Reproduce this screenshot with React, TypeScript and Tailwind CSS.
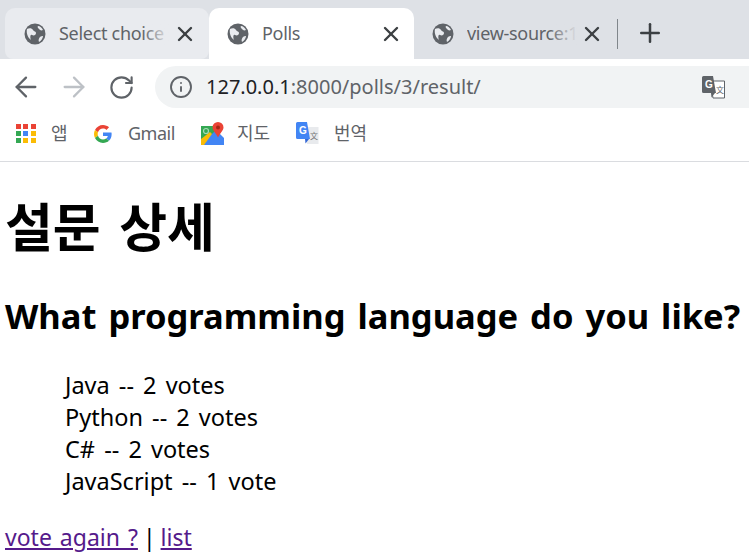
import { ArrowLeft, ArrowRight, Info, Plus, RotateCw, X } from 'lucide-react';

const font = "font-['Noto_Sans','Noto_Sans_CJK_KR',sans-serif]";

function Globe() {
  return (
    <svg width="22" height="22" viewBox="0 0 22 22" className="shrink-0">
      <circle cx="11" cy="11" r="10.5" fill="#5f6368" />
      <path d="M3 6c2-1 5-1 6 1s3 1 3 3-2 3-4 2-2 3-1 5C4 15 2 10 3 6z" fill="#e9ebef" />
      <path d="M14 3c2 0 4 2 5 4-2 1-3 0-4-1s-2-2-1-3zM19 13c0 2-2 5-4 6-1-2 0-4 1-5s2-1 3-1z" fill="#e9ebef" />
    </svg>
  );
}

function Tab({ title, active, first }: { title: string; active?: boolean; first?: boolean }) {
  return (
    <div
      className={`flex items-center h-[51px] shrink-0 rounded-t-[10px] ${first ? 'w-[204px] pl-[19px] pr-[12px] bg-[#e9ebef] rounded-b-[8px]' : active ? 'w-[205px] pl-[18px] pr-[11px] bg-white' : 'w-[197px] pl-[18px] pr-[7px]'}`}
    >
      <Globe />
      <div className="relative ml-[13px] flex-1 overflow-hidden whitespace-nowrap text-[18px] tracking-[-0.3px] text-[#5f6368]">
        {title}
        {first && <div className="absolute right-0 top-0 bottom-0 w-[28px] bg-gradient-to-r from-transparent to-[#e9ebef]" />}
        {!first && !active && <div className="absolute right-0 top-0 bottom-0 w-[28px] bg-gradient-to-r from-transparent to-[#dee1e6]" />}
      </div>
      <X size={24} strokeWidth={2.4} className="ml-[3px] shrink-0 text-[#3c4043]" />
    </div>
  );
}

function AppsIcon() {
  const colors = ['#ea4335', '#ea4335', '#ea4335', '#34a853', '#4285f4', '#fbbc05', '#34a853', '#fbbc05', '#fbbc05'];
  return (
    <div className="grid grid-cols-3 gap-[2px] w-[20px]">
      {colors.map((c, i) => (
        <div key={i} className="w-[5px] h-[5px]" style={{ background: c }} />
      ))}
    </div>
  );
}

function GoogleIcon() {
  return (
    <svg width="18" height="18" viewBox="0 0 48 48">
      <path fill="#ea4335" d="M24 9.5c3.5 0 6.700 1.200 9.200 3.600l6.900-6.900C35.900 2.400 30.500 0 24 0 14.600 0 6.500 5.400 2.600 13.200l8 6.200C12.500 13.700 17.800 9.500 24 9.500z" />
      <path fill="#4285f4" d="M47 24.500c0-1.600-.1-3.100-.4-4.500H24v9h12.900c-.6 3-2.200 5.500-4.700 7.200l7.700 6C44.400 38.100 47 31.900 47 24.500z" />
      <path fill="#fbbc05" d="M10.600 28.600c-.5-1.400-.8-3-.8-4.600s.3-3.200.8-4.600l-8-6.200C.9 16.500 0 20.100 0 24s.9 7.500 2.600 10.800l8-6.200z" />
      <path fill="#34a853" d="M24 48c6.500 0 11.900-2.100 15.900-5.800l-7.700-6c-2.200 1.400-4.900 2.300-8.200 2.300-6.200 0-11.500-4.200-13.400-9.900l-8 6.200C6.500 42.600 14.600 48 24 48z" />
    </svg>
  );
}

function MapsIcon() {
  return (
    <svg width="23" height="23" viewBox="0 0 23 23">
      <path d="M0 4h15v19H0z" fill="#34a853" />
      <path d="M0 23L15 8l8 8v7z" fill="#4285f4" />
      <path d="M0 17L9 10l2 2-8 11H0z" fill="#fbbc05" />
      <circle cx="5" cy="9" r="2.500" fill="none" stroke="#a8dab5" strokeWidth="1.200" />
      <path d="M17 0a5.500 5.500 0 0 1 5.500 5.500c0 3-3.500 5.500-5.500 10-2-4.500-5.500-7-5.500-10A5.500 5.500 0 0 1 17 0z" fill="#ea4335" />
      <circle cx="17" cy="5.500" r="2" fill="#a52714" />
    </svg>
  );
}

function TranslateIcon({ mono }: { mono?: boolean }) {
  const back = mono ? '#ffffff' : '#e8eaed';
  const front = mono ? '#5f6368' : '#4285f4';
  return (
    <svg width="23" height="23" viewBox="0 0 23 23">
      <path d="M8 5h14.500v17H11z" fill={back} stroke={mono ? '#5f6368' : 'none'} strokeWidth="1" />
      <path d="M1.500 0H11l3 17H1.500A1.500 1.500 0 0 1 0 15.500v-14A1.500 1.500 0 0 1 1.500 0z" fill={front} />
      <path d="M9 17l4 0-3.500 4.500z" fill={mono ? '#5f6368' : '#3367d6'} />
      <text x="3" y="12" fontSize="10" fontWeight="700" fill="#ffffff" fontFamily="'Liberation Sans', sans-serif">G</text>
      <text x="14" y="17" fontSize="8" fill={mono ? '#5f6368' : '#757575'} fontFamily="'Noto Sans CJK SC', sans-serif">文</text>
    </svg>
  );
}

function Bookmark({ icon, label, gap, width }: { icon: React.ReactNode; label: string; gap: string; width: string }) {
  return (
    <div className={`flex items-center shrink-0 ${width}`}>
      {icon}
      <span className={`${gap} text-[18px] text-[#5f6368] whitespace-nowrap`}>{label}</span>
    </div>
  );
}

export default function App() {
  return (
    <div className={`${font} w-[749px] h-[554px] overflow-hidden bg-white text-black`}>
      {/* tab strip */}
      <div className="flex items-start h-[59px] pt-2 pl-[5px] bg-[#dee1e6]">
        <Tab title="Select choice" first />
        <Tab title="Polls" active />
        <Tab title="view-source:1" />
        <div className="ml-[6px] mt-[11px] w-px h-[30px] bg-[#80868b]" />
        <Plus size={30} strokeWidth={2} className="ml-[17px] mt-[10px] text-[#3c4043]" />
      </div>

      {/* address bar */}
      <div className="flex items-center h-[54px] pt-[2px] bg-white">
        <ArrowLeft size={32} strokeWidth={1.7} className="ml-[10px] text-[#5f6368]" />
        <ArrowRight size={32} strokeWidth={1.7} className="ml-[16px] text-[#bdc1c6]" />
        <RotateCw size={27} strokeWidth={1.9} className="ml-[18px] text-[#5f6368]" />
        <div className="flex items-center ml-[20px] flex-1 h-[42px] pl-[14px] rounded-l-[21px] bg-[#f1f3f4]">
          <Info size={24} strokeWidth={1.9} className="text-[#5f6368]" />
          <div className="ml-[13px] text-[20px] text-[#5f6368] whitespace-nowrap">
            <span className="text-[#202124]">127.0.0.1</span>:8000/polls/3/result/
          </div>
          <div className="ml-auto mr-[24px]">
            <TranslateIcon mono />
          </div>
        </div>
      </div>

      {/* bookmarks */}
      <div className="flex items-center h-[49px] pl-[16px] pb-[7px] border-b border-[#dadce0]">
        <Bookmark icon={<AppsIcon />} label="앱" gap="ml-[15px]" width="w-[78px]" />
        <Bookmark icon={<GoogleIcon />} label="Gmail" gap="ml-[16px] tracking-[-0.5px]" width="w-[107px]" />
        <Bookmark icon={<MapsIcon />} label="지도" gap="ml-[13px]" width="w-[95px]" />
        <Bookmark icon={<TranslateIcon />} label="번역" gap="ml-[15px]" width="w-[90px]" />
      </div>

      {/* page */}
      <div className="pl-[5px]">
        <h1 className="mt-[31px] text-[52px] leading-[68px] font-bold whitespace-nowrap [word-spacing:5px]">설문 상세</h1>
        <h2 className="mt-[30px] text-[34.5px] leading-[50px] font-bold whitespace-nowrap [word-spacing:3px]">What programming language do you like?</h2>
        <ul className="mt-[28px] pl-[60px] text-[23.5px] leading-[32px] [word-spacing:3px]">
          <li>Java -- 2 votes</li>
          <li>Python -- 2 votes</li>
          <li>C# -- 2 votes</li>
          <li>JavaScript -- 1 vote</li>
        </ul>
        <div className="mt-[24px] text-[23px] leading-[32px] whitespace-nowrap [word-spacing:-1px]">
          <a href="#" className="underline text-[#551a8b] [word-spacing:2px]">vote again ?</a> | <a href="#" className="underline text-[#551a8b]">list</a>
        </div>
      </div>
    </div>
  );
}
